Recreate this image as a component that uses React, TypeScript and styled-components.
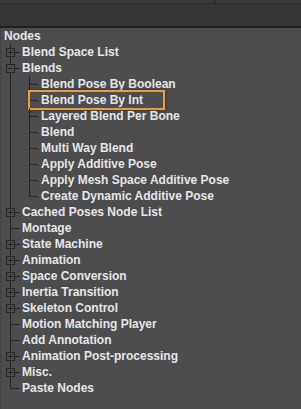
import React from "react";
import styled, { createGlobalStyle } from "styled-components";

type NodeItem = {
  label: string;
  expandable?: boolean;
  open?: boolean;
  highlighted?: boolean;
  children?: NodeItem[];
};

const categories: NodeItem[] = [
  { label: "Blend Space List", expandable: true },
  {
    label: "Blends",
    expandable: true,
    open: true,
    children: [
      { label: "Blend Pose By Boolean" },
      { label: "Blend Pose By Int", highlighted: true },
      { label: "Layered Blend Per Bone" },
      { label: "Blend" },
      { label: "Multi Way Blend" },
      { label: "Apply Additive Pose" },
      { label: "Apply Mesh Space Additive Pose" },
      { label: "Create Dynamic Additive Pose" },
    ],
  },
  { label: "Cached Poses Node List", expandable: true },
  { label: "Montage" },
  { label: "State Machine", expandable: true },
  { label: "Animation", expandable: true },
  { label: "Space Conversion", expandable: true },
  { label: "Inertia Transition", expandable: true },
  { label: "Skeleton Control", expandable: true },
  { label: "Motion Matching Player" },
  { label: "Add Annotation" },
  { label: "Animation Post-processing", expandable: true },
  { label: "Misc.", expandable: true },
  { label: "Paste Nodes" },
];

const GlobalStyle = createGlobalStyle`
  html, body {
    margin: 0;
    padding: 0;
    background: #4d4d4d;
  }
  body {
    font-family: "Liberation Sans", Arial, sans-serif;
  }
`;

export default function App() {
  return (
    <>
      <GlobalStyle />
      <Window>
        <TopStrip>
          <Tick style={{ width: 214 }} />
          <Tick />
        </TopStrip>
        <Toolbar />
        <Panel>
          <Row>
            <RootLabel>Nodes</RootLabel>
          </Row>
          {categories.map((item, i) => (
            <Category key={item.label} item={item} last={i === categories.length - 1} />
          ))}
        </Panel>
      </Window>
    </>
  );
}

function Category({ item, last }: { item: NodeItem; last: boolean }) {
  return (
    <>
      <Row>
        <Gutter $width={20}>
          <VLine $x={10} $half={last} />
          <HLine $x={10} $width={10} />
          {item.expandable && <Expander open={item.open} />}
        </Gutter>
        <Label>{item.label}</Label>
      </Row>
      {item.open &&
        item.children?.map((child, j) => (
          <Row key={child.label}>
            <Gutter $width={20}>
              <VLine $x={10} />
            </Gutter>
            <Gutter $width={18}>
              <VLine $x={9} $half={j === item.children!.length - 1} />
              <HLine $x={9} $width={9} />
            </Gutter>
            <Label $pad={2}>{child.label}</Label>
            {child.highlighted && <Highlight />}
          </Row>
        ))}
    </>
  );
}

function Expander({ open }: { open?: boolean }) {
  return (
    <Box>
      <svg width="9" height="9" viewBox="0 0 9 9">
        <rect x="0.5" y="0.5" width="8" height="8" fill="#4d4d4d" stroke="#262626" />
        <line x1="2" y1="4.5" x2="7" y2="4.5" stroke="#262626" />
        {!open && <line x1="4.5" y1="2" x2="4.5" y2="7" stroke="#262626" />}
      </svg>
    </Box>
  );
}

const Window = styled.div`
  width: 301px;
  height: 409px;
  display: flex;
  flex-direction: column;
  background: #4d4d4d;
  overflow: hidden;
`;

const TopStrip = styled.div`
  height: 3px;
  display: flex;
  background: #2c2c2c;
`;

const Tick = styled.div`
  flex: 0 0 auto;
  width: 87px;
  border-right: 1px solid #1c1c1c;
  background: #3a3a3a;
`;

const Toolbar = styled.div`
  height: 22px;
  background: #353535;
  border-top: 1px solid #2a2a2a;
  border-bottom: 2px solid #222222;
`;

const Panel = styled.div`
  flex: 1;
  display: flex;
  flex-direction: column;
  border-left: 1px solid #444444;
  background: #4d4d4d;
`;

const Row = styled.div`
  position: relative;
  height: 16px;
  display: flex;
  align-items: center;
`;

const Gutter = styled.div<{ $width: number }>`
  position: relative;
  flex: 0 0 ${(p) => p.$width}px;
  height: 100%;
`;

const VLine = styled.div<{ $x: number; $half?: boolean }>`
  position: absolute;
  left: ${(p) => p.$x - 1}px;
  top: 0;
  width: 1px;
  height: ${(p) => (p.$half ? "8px" : "100%")};
  background: #262626;
`;

const HLine = styled.div<{ $x: number; $width: number }>`
  position: absolute;
  left: ${(p) => p.$x - 1}px;
  top: 8px;
  width: ${(p) => p.$width}px;
  height: 1px;
  background: #262626;
`;

const Box = styled.div`
  position: absolute;
  left: 5px;
  top: 4px;
  width: 9px;
  height: 9px;
  display: flex;

  svg {
    display: block;
  }
`;

const Label = styled.span<{ $pad?: number }>`
  padding-left: ${(p) => p.$pad ?? 1}px;
  font-size: 12px;
  font-weight: bold;
  line-height: 16px;
  color: #e4e6ea;
  white-space: nowrap;
`;

const RootLabel = styled(Label)`
  padding-left: 3px;
`;

const Highlight = styled.div`
  position: absolute;
  left: 27px;
  top: -2px;
  width: 133px;
  height: 16px;
  border: 2px solid #f0983c;
  box-shadow: 0 0 4px rgba(0, 0, 0, 0.35);
  pointer-events: none;
`;
